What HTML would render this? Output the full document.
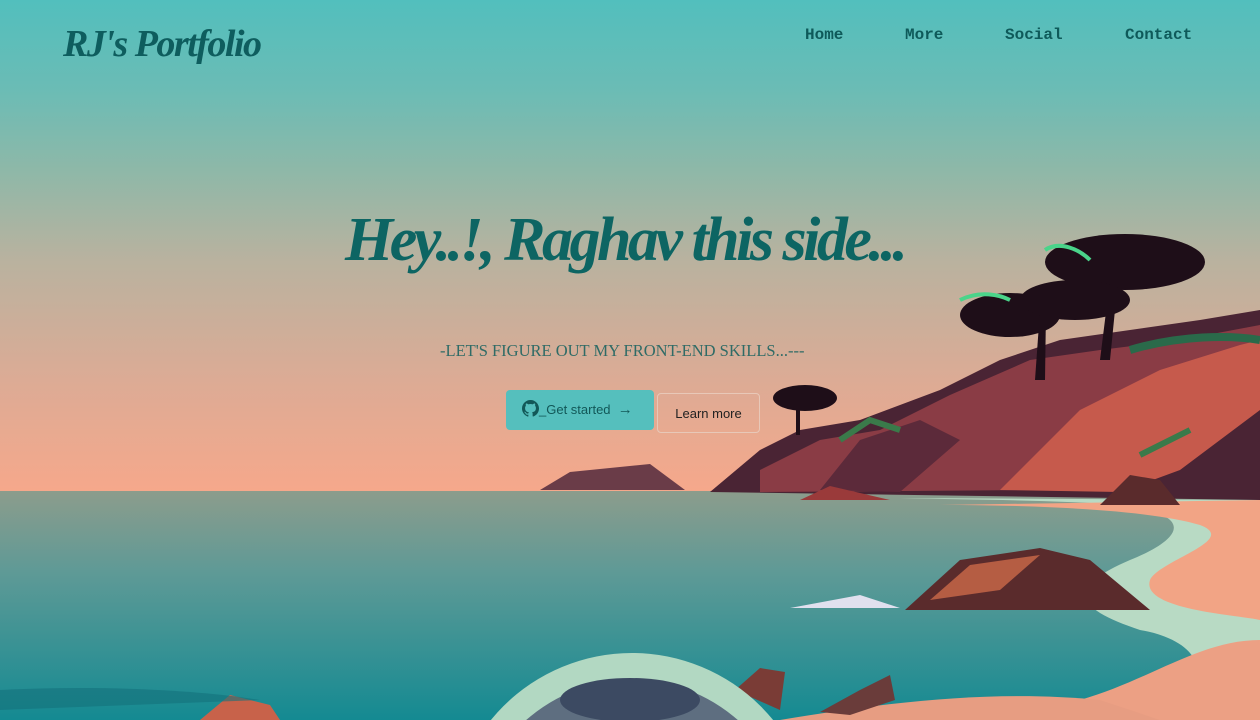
<!DOCTYPE html>
<html style="overflow:hidden"><head><style>
body{margin:0;width:1260px;height:720px;overflow:hidden;position:relative;font-family:"Liberation Sans",sans-serif}
.sky{position:absolute;left:0;top:0;width:1260px;height:720px;background:linear-gradient(#52bfbd 0,#6bbcb5 90px,#8eb8a8 170px,#b9b29f 260px,#dcab95 380px,#f6a88b 492px)}
.logo{position:absolute;left:63px;top:22px;font:italic bold 38px "Liberation Serif",serif;color:#0e5d5e;letter-spacing:-1.5px}
.nav{position:absolute;top:26px;font:bold 16px "Liberation Mono",monospace;color:#0e5a5a}
h1{position:absolute;left:345px;width:580px;top:205px;margin:0;white-space:nowrap;font:italic bold 62px "Liberation Serif",serif;color:#0d6563;letter-spacing:-3.5px}
.sub{position:absolute;left:440px;top:341px;font:16.5px "Liberation Serif",serif;color:#2f6b66;white-space:nowrap}
.b1{position:absolute;left:506px;top:390px;width:148px;height:40px;background:#55bfbd;border-radius:4px;color:#125858;font-size:13px;line-height:40px;box-sizing:border-box;padding-left:16px}
.b2{position:absolute;left:657px;top:393px;width:103px;height:40px;border:1px solid #e8c8b8;border-radius:4px;box-sizing:border-box;font-size:13px;line-height:40px;text-align:center;color:#222}
</style></head><body>
<div class="sky"></div>
<svg style="position:absolute;left:0;top:0" width="1260" height="720">
<defs><linearGradient id="sea" x1="0" y1="0" x2="0" y2="1"><stop offset="0" stop-color="#8c9c8c"/><stop offset=".35" stop-color="#5f9a96"/><stop offset="1" stop-color="#148a92"/></linearGradient></defs>
<rect x="0" y="491" width="1260" height="229" fill="url(#sea)"/>
<path d="M540 490 L570 472 L650 464 L685 490Z" fill="#6a3c48"/>
<path d="M710 492 L760 450 L800 430 L860 420 L940 390 L1000 360 L1060 340 L1130 330 L1200 320 L1260 310 L1260 500 Z" fill="#4a2434"/>
<path d="M760 470 L820 440 L880 430 L950 395 L1030 360 L1100 350 L1180 340 L1260 325 L1260 360 L1180 400 L1100 440 L1040 490 L760 492Z" fill="#8a3c45"/>
<path d="M1000 490 L1080 410 L1160 370 L1240 345 L1260 340 L1260 410 L1180 470 L1120 492Z" fill="#c65a4c"/>
<path d="M820 490 L860 440 L920 420 L960 440 L900 492Z" fill="#5c2a3a"/>
<path d="M900 498 C980 500 1060 500 1120 505 C1200 515 1180 540 1130 560 C1060 590 1080 610 1140 630 C1200 640 1220 680 1160 700 L1120 720 L1260 720 L1260 500Z" fill="#b8dac4"/>
<path d="M940 505 C1040 505 1150 510 1200 525 C1240 540 1160 560 1150 580 C1140 610 1240 615 1260 620 L1260 500Z" fill="#f2a485"/>
<path d="M1080 700 C1150 680 1200 640 1260 640 L1260 720 L1060 720Z" fill="#eca084"/>
<path d="M780 720 C900 700 1000 690 1100 700 L1160 720Z" fill="#e79d82"/>
<path d="M905 610 L960 560 L1040 548 L1090 560 L1150 610Z" fill="#5a2b2c"/>
<path d="M930 600 L970 565 L1040 555 L1000 590Z" fill="#b55d43"/>
<path d="M1100 505 L1130 475 L1160 480 L1180 505Z" fill="#5a2b2c"/>
<path d="M800 500 L830 486 L890 500Z" fill="#9a3a3a"/>
<path d="M790 608 L860 595 L900 608Z" fill="#e0e0ee"/>
<path d="M820 712 L860 690 L890 675 L895 700 L850 715Z" fill="#6a3c3a"/>
<path d="M735 690 L760 668 L785 672 L780 710Z" fill="#7a3c36"/>
<path d="M200 720 L230 695 L270 705 L280 720Z" fill="#c8624a"/>
<path d="M0 690 C100 685 200 690 260 700 L0 710Z" fill="#14727c" opacity=".6"/>
<circle cx="632" cy="835" r="182" fill="#b2d8c2"/>
<circle cx="632" cy="840" r="160" fill="#5e6e80"/>
<ellipse cx="630" cy="700" rx="70" ry="22" fill="#3c4a62"/>
<g fill="#1e0e18">
<ellipse cx="1125" cy="262" rx="80" ry="28"/><ellipse cx="1010" cy="315" rx="50" ry="22"/><ellipse cx="1075" cy="300" rx="55" ry="20"/>
<path d="M1110 280 L1118 280 L1110 360 L1100 360Z"/><path d="M1040 310 L1046 310 L1045 380 L1035 380Z"/>
<ellipse cx="805" cy="398" rx="32" ry="13"/><rect x="796" y="400" width="4" height="35"/>
</g>
<path d="M960 300 C980 290 1000 295 1010 300 M1045 250 C1060 240 1080 250 1090 260" stroke="#4ad48a" stroke-width="4" fill="none"/>
<path d="M1130 350 C1180 335 1230 335 1260 340" stroke="#2a6a4a" stroke-width="8" fill="none"/>
<path d="M840 440 L870 420 L900 430 M1140 455 L1190 430" stroke="#3a7a4a" stroke-width="6" fill="none"/>
</svg>
<div class="logo">RJ's Portfolio</div>
<div class="nav" style="left:805px">Home</div>
<div class="nav" style="left:905px">More</div>
<div class="nav" style="left:1005px">Social</div>
<div class="nav" style="left:1125px">Contact</div>
<h1>Hey..!, Raghav this side...</h1>
<div class="sub">-LET'S FIGURE OUT MY FRONT-END SKILLS...---</div>
<div class="b1"><svg width="17" height="17" viewBox="0 0 16 16" style="vertical-align:-3px"><path fill="#125858" d="M8 0C3.6 0 0 3.6 0 8c0 3.5 2.3 6.5 5.5 7.6.4.1.5-.2.5-.4v-1.4c-2.2.5-2.7-1-2.7-1-.4-.9-.9-1.2-.9-1.2-.7-.5.1-.5.1-.5.8.1 1.2.8 1.200.8.7 1.2 1.900.9 2.300.7.1-.5.3-.9.5-1.1-1.800-.2-3.600-.9-3.600-4 0-.9.3-1.600.8-2.100-.1-.2-.4-1 .1-2.100 0 0 .7-.2 2.200.8.6-.2 1.300-.3 2-.3s1.400.1 2 .3c1.500-1 2.200-.8 2.200-.8.4 1.100.2 1.900.1 2.100.5.6.8 1.300.8 2.100 0 3.100-1.900 3.700-3.600 3.900.3.3.5.8.5 1.500v2.200c0 .2.1.5.6.4C13.700 14.500 16 11.500 16 8c0-4.400-3.600-8-8-8z"/></svg>_Get started &nbsp;<b style="font-size:15px">→</b></div>
<div class="b2">Learn more</div>
</body></html>
